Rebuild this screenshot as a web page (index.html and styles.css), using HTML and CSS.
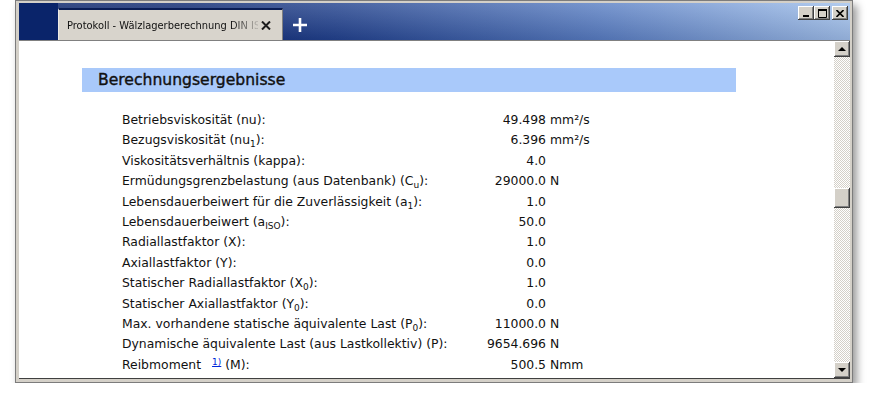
FILE: index.html
```html
<!DOCTYPE html>
<html lang="de">
<head>
    <meta charset="UTF-8">
    <meta name="viewport" content="width=device-width, initial-scale=1.0">
    <title>Protokoll - Wälzlagerberechnung DIN ISO 281</title>
    <link rel="stylesheet" href="styles.css">
</head>
<body>
    <div class="window">
        <div class="titlebar">
            <div class="brand"></div>
            <div class="tab">
                <span class="tab-title">Protokoll - Wälzlagerberechnung DIN ISO 281</span>
                <svg class="tab-close" width="10" height="9" viewBox="0 0 10 9">
                    <path d="M1 0.5 L9 8.5 M9 0.5 L1 8.5" stroke="#1c1c1c" stroke-width="2" fill="none"/>
                </svg>
            </div>
            <div class="new-tab">
                <svg width="14" height="14" viewBox="0 0 14 14">
                    <path d="M7 0 V14 M0 7 H14" stroke="#fff" stroke-width="2.6" fill="none"/>
                </svg>
            </div>
            <div class="win-buttons">
                <span class="win-btn">
                    <svg width="8" height="7" viewBox="0 0 8 7"><rect x="1" y="5" width="6" height="2" fill="#000"/></svg>
                </span>
                <span class="win-btn">
                    <svg width="9" height="9" viewBox="0 0 9 9"><path d="M0.5 1 H8.5 V8.5 H0.5 Z" stroke="#000" fill="none"/><rect x="0" y="0" width="9" height="2" fill="#000"/></svg>
                </span>
                <span class="win-btn close">
                    <svg width="8" height="7" viewBox="0 0 8 7"><path d="M0.5 0 L7.5 7 M7.5 0 L0.5 7" stroke="#000" stroke-width="1.6" fill="none"/></svg>
                </span>
            </div>
        </div>

        <div class="main">
            <div class="content">
                <h2 class="section-title">Berechnungsergebnisse</h2>
                <div class="results">
                    <div class="label">Betriebsviskosität (nu):</div>
                    <div class="value">49.498</div>
                    <div class="unit">mm²/s</div>

                    <div class="label">Bezugsviskosität (nu<span class="sub">1</span>):</div>
                    <div class="value">6.396</div>
                    <div class="unit">mm²/s</div>

                    <div class="label">Viskositätsverhältnis (kappa):</div>
                    <div class="value">4.0</div>
                    <div class="unit"></div>

                    <div class="label">Ermüdungsgrenzbelastung (aus Datenbank) (C<span class="sub">u</span>):</div>
                    <div class="value">29000.0</div>
                    <div class="unit">N</div>

                    <div class="label">Lebensdauerbeiwert für die Zuverlässigkeit (a<span class="sub">1</span>):</div>
                    <div class="value">1.0</div>
                    <div class="unit"></div>

                    <div class="label">Lebensdauerbeiwert (a<span class="sub">ISO</span>):</div>
                    <div class="value">50.0</div>
                    <div class="unit"></div>

                    <div class="label">Radiallastfaktor (X):</div>
                    <div class="value">1.0</div>
                    <div class="unit"></div>

                    <div class="label">Axiallastfaktor (Y):</div>
                    <div class="value">0.0</div>
                    <div class="unit"></div>

                    <div class="label">Statischer Radiallastfaktor (X<span class="sub">0</span>):</div>
                    <div class="value">1.0</div>
                    <div class="unit"></div>

                    <div class="label">Statischer Axiallastfaktor (Y<span class="sub">0</span>):</div>
                    <div class="value">0.0</div>
                    <div class="unit"></div>

                    <div class="label">Max. vorhandene statische äquivalente Last (P<span class="sub">0</span>):</div>
                    <div class="value">11000.0</div>
                    <div class="unit">N</div>

                    <div class="label">Dynamische äquivalente Last (aus Lastkollektiv) (P):</div>
                    <div class="value">9654.696</div>
                    <div class="unit">N</div>

                    <div class="label">Reibmoment<a class="note" href="#fn1">1)</a> (M):</div>
                    <div class="value">500.5</div>
                    <div class="unit">Nmm</div>
                </div>
            </div>

            <div class="scrollbar">
                <div class="sb-btn"><span class="arrow-up"></span></div>
                <div class="sb-track"><div class="sb-thumb"></div></div>
                <div class="sb-btn"><span class="arrow-down"></span></div>
            </div>
        </div>
    </div>
</body>
</html>
```

FILE: styles.css
```css
body {
    margin: 0;
    background-color: #fff;
    font-family: "DejaVu Sans", Verdana, sans-serif;
    color: #111;
}

.window {
    margin-left: 15px;
    width: 838px;
    height: 383px;
    box-sizing: border-box;
    border: 1px solid #7c7c7c;
    background-color: #d4d0c8;
    padding: 2px 2px 3px 3px;
    box-shadow: 4px 5px 8px rgba(0, 0, 0, 0.4);
    display: flex;
    flex-direction: column;
}

/* title bar with tabs */
.titlebar {
    height: 38px;
    box-sizing: border-box;
    border-bottom: 1px solid #808080;
    display: flex;
    background:
        linear-gradient(to bottom, rgba(255, 255, 255, 0.18), rgba(0, 0, 30, 0.12)),
        linear-gradient(to right, #0a246a 0%, #0f2a72 20%, #23438e 38%, #5b80c4 70%, #a3c2ec 100%);
}

.brand {
    width: 39px;
    background-color: #0a246a;
}

.tab {
    margin-top: 5px;
    width: 225px;
    box-sizing: border-box;
    border-top: 2px solid #0a1d55;
    border-left: 1px solid #eeebe4;
    border-right: 1px solid #808080;
    background-color: #d8d4cc;
    padding-left: 8px;
    display: flex;
    align-items: center;
}

.tab-title {
    width: 191px;
    overflow: hidden;
    white-space: nowrap;
    font-family: "DejaVu Sans Condensed", "DejaVu Sans", sans-serif;
    font-size: 11px;
    color: #111;
    -webkit-mask-image: linear-gradient(to right, #000 86%, rgba(0, 0, 0, 0.15) 100%);
    mask-image: linear-gradient(to right, #000 86%, rgba(0, 0, 0, 0.15) 100%);
}

.tab-close {
    margin-left: 3px;
    margin-top: 1px;
}

.new-tab {
    align-self: flex-start;
    margin-top: 15px;
    margin-left: 10px;
    height: 14px;
}

.new-tab svg {
    display: block;
}

.win-buttons {
    margin-left: auto;
    margin-right: 2px;
    margin-top: 3px;
    align-self: flex-start;
    display: flex;
}

.win-btn {
    width: 16px;
    height: 14px;
    box-sizing: border-box;
    background-color: #d4d0c8;
    box-shadow: inset -1px -1px #404040, inset 1px 1px #fff, inset -2px -2px #808080;
    display: flex;
    align-items: center;
    justify-content: center;
}

.win-btn.close {
    margin-left: 2px;
}

/* page body */
.main {
    flex: 1;
    display: flex;
    border-bottom: 1px solid #404040;
    min-height: 0;
}

.content {
    flex: 1;
    background-color: #fff;
    overflow: hidden;
}

.section-title {
    margin: 27px 0 0 63px;
    width: 654px;
    height: 24px;
    box-sizing: border-box;
    padding-left: 16px;
    background-color: #a9c9fa;
    font-size: 15.6px;
    font-weight: normal;
    -webkit-text-stroke: 0.4px #111;
    line-height: 25px;
    color: #111;
}

.results {
    margin: 18px 0 0 103px;
    display: grid;
    grid-template-columns: 338px 86px auto;
    grid-auto-rows: 20.4px;
    font-size: 12.4px;
    line-height: 20.4px;
    white-space: nowrap;
}

.value {
    text-align: right;
}

.unit {
    padding-left: 4px;
}

.sub {
    font-size: 9px;
    line-height: 0;
    vertical-align: -3px;
}

.note {
    margin-left: 11px;
    font-size: 9px;
    line-height: 0;
    vertical-align: 4px;
    color: #0026d9;
}

/* scrollbar */
.scrollbar {
    width: 16px;
    display: flex;
    flex-direction: column;
}

.sb-btn {
    height: 16px;
    background-color: #d4d0c8;
    box-shadow: inset -1px -1px #404040, inset 1px 1px #fff, inset -2px -2px #808080;
    display: flex;
    align-items: center;
    justify-content: center;
}

.arrow-up {
    width: 0;
    height: 0;
    border-left: 4px solid transparent;
    border-right: 4px solid transparent;
    border-bottom: 4px solid #000;
}

.arrow-down {
    width: 0;
    height: 0;
    border-left: 4px solid transparent;
    border-right: 4px solid transparent;
    border-top: 4px solid #000;
}

.sb-track {
    flex: 1;
    background: repeating-conic-gradient(#d4d0c8 0 25%, #fff 0 50%) 0 0 / 2px 2px;
}

.sb-thumb {
    margin-top: 131px;
    height: 20px;
    background-color: #d4d0c8;
    box-shadow: inset -1px -1px #404040, inset 1px 1px #fff, inset -2px -2px #808080;
}
```
